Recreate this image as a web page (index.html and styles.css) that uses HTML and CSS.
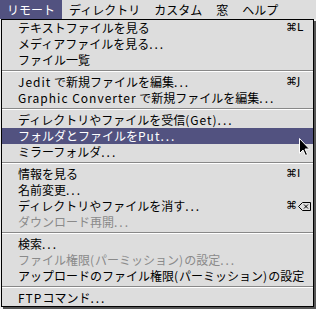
FILE: index.html
```html
<!DOCTYPE html>
<html lang="ja">
<head>
  <meta charset="UTF-8" />
  <title>リモート</title>
  <link rel="stylesheet" href="styles.css">
</head>
<body>
  <div class="menubar">
    <span class="titulo ativo">リモート</span>
    <span class="titulo">ディレクトリ</span>
    <span class="titulo">カスタム</span>
    <span class="titulo">窓</span>
    <span class="titulo">ヘルプ</span>
  </div>

  <ul class="menu">
    <li class="item"><span>テキストファイルを見る</span><span class="atalho">⌘L</span></li>
    <li class="item"><span>メディアファイルを見る<span class="dots">...</span></span></li>
    <li class="item"><span>ファイル一覧</span></li>
    <li class="sep"></li>
    <li class="item"><span><span class="lat">Jedit</span> で新規ファイルを編集<span class="dots">...</span></span><span class="atalho">⌘J</span></li>
    <li class="item"><span><span class="lat">Graphic Converter</span> で新規ファイルを編集<span class="dots">...</span></span></li>
    <li class="sep"></li>
    <li class="item"><span>ディレクトリやファイルを受信<span class="lat">(Get)</span><span class="dots">...</span></span></li>
    <li class="item selecionado"><span>フォルダとファイルを<span class="lat">Put</span><span class="dots">...</span></span></li>
    <li class="item"><span>ミラーフォルダ<span class="dots">...</span></span></li>
    <li class="sep"></li>
    <li class="item"><span>情報を見る</span><span class="atalho">⌘I</span></li>
    <li class="item"><span>名前変更<span class="dots">...</span></span></li>
    <li class="item">
      <span>ディレクトリやファイルを消す<span class="dots">...</span></span>
      <span class="atalho">⌘<svg class="tecla-del" width="13" height="9" viewBox="0 0 13 9"><path d="M0.5 4.5 L4.5 0.5 H12.5 V8.5 H4.5 Z" fill="none" stroke="#000"/><path d="M6 2.5 L10 6.5 M10 2.5 L6 6.5" stroke="#000"/></svg></span>
    </li>
    <li class="item desativado"><span>ダウンロード再開<span class="dots">...</span></span></li>
    <li class="sep"></li>
    <li class="item"><span>検索<span class="dots">...</span></span></li>
    <li class="item desativado"><span>ファイル権限<span class="lat">(</span>パーミッション<span class="lat">)</span>の設定<span class="dots">...</span></span></li>
    <li class="item"><span>アップロードのファイル権限<span class="lat">(</span>パーミッション<span class="lat">)</span>の設定</span></li>
    <li class="sep"></li>
    <li class="item"><span><span class="lat">FTP</span>コマンド<span class="dots">...</span></span></li>
  </ul>

  <svg class="cursor" width="12" height="19" viewBox="0 0 12 19">
    <path d="M0.5 0.5 L0.5 15.5 L4 12 L6.5 17.5 L8.5 16.5 L6 11 L10.5 11 Z" fill="#000" stroke="#fff" stroke-width="1"/>
  </svg>
</body>
</html>
```

FILE: styles.css
```css
body {
  margin: 0;
  background-color: #eeeeee;
  font-family: "Noto Sans CJK JP", "DejaVu Sans", sans-serif;
  font-size: 12px;
  color: #000;
  position: relative;
  width: 316px;
  height: 309px;
  overflow: hidden;
}

.menubar {
  display: flex;
  height: 19px;
  background-color: #dddddd;
  line-height: 19px;
}

.titulo {
  padding: 0 7px;
  white-space: nowrap;
}

.ativo {
  background-color: #525280;
  color: #fff;
}

.menu {
  list-style: none;
  margin: 0 0 0 1px;
  padding: 0;
  width: 311px;
  background-color: #dddddd;
  border: 1px solid #000;
  box-shadow: 2px 2px 0 #555;
}

.item {
  display: flex;
  justify-content: space-between;
  align-items: center;
  height: 16px;
  line-height: 16px;
  padding-left: 16px;
  white-space: nowrap;
}

.atalho {
  display: flex;
  align-items: center;
  gap: 1px;
  width: 27px;
  font-family: "DejaVu Sans", sans-serif;
  font-size: 11px;
}

.tecla-del {
  display: block;
}

.lat {
  letter-spacing: 1px;
}

.dots {
  letter-spacing: 2px;
}

.selecionado {
  background-color: #525280;
  color: #fff;
}

.desativado {
  color: #8a8a8a;
}

.sep {
  height: 6px;
  box-sizing: border-box;
  border-top: 2px solid #dddddd;
  border-bottom: 2px solid #dddddd;
  background: linear-gradient(#888 0 1px, #fff 1px 2px);
}

.cursor {
  position: absolute;
  left: 299px;
  top: 138px;
}
```
